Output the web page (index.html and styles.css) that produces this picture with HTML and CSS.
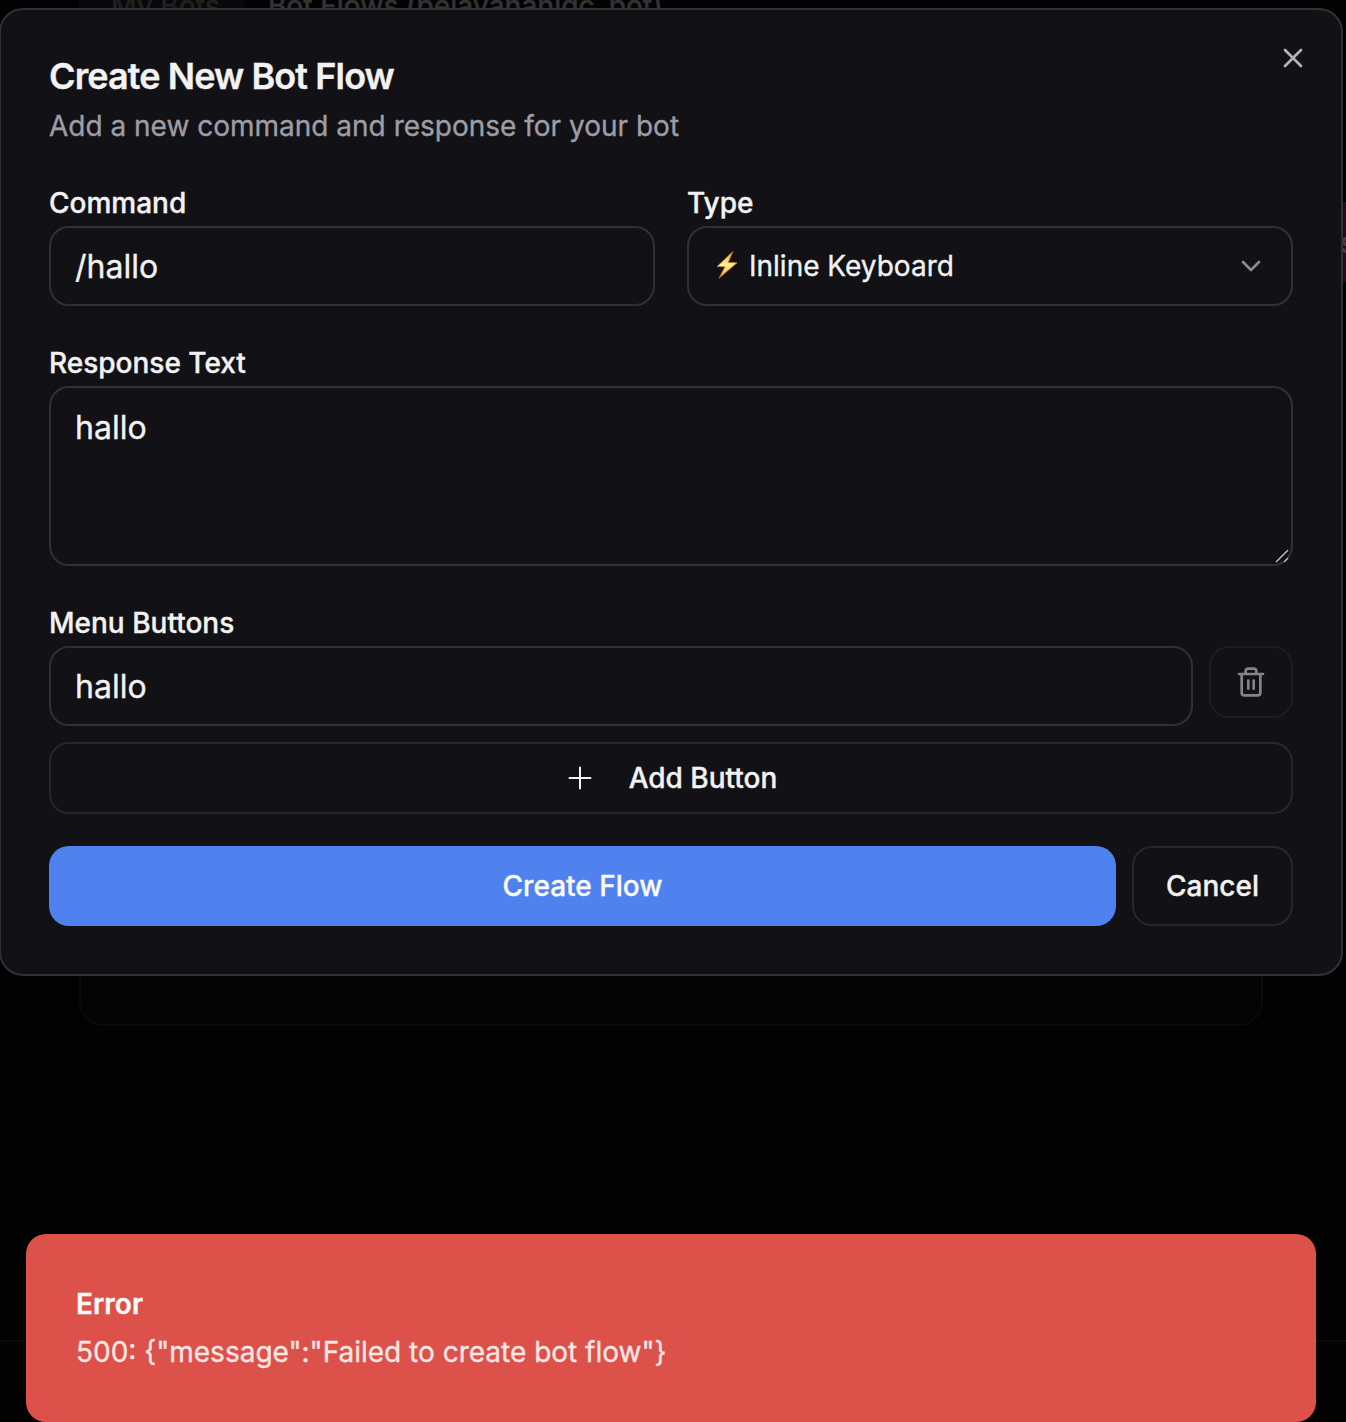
FILE: index.html
```html
<!DOCTYPE html>
<html lang="en">
<head>
<meta charset="utf-8">
<title>Create New Bot Flow</title>
<link rel="stylesheet" href="styles.css">
</head>
<body>
<div class="page" aria-hidden="true">
  <div class="tabs"><span class="tab tab-muted">My Bots</span><span class="tab">Bot Flows (pelavananidc_bot)</span></div>
  <div class="panel"></div>
  <div class="footer"></div>
  <div class="side-button">s</div>
</div>
<main class="dialog">
  <button class="close" aria-label="Close">
    <svg width="32" height="32" viewBox="0 0 24 24"><path d="M18 6 6 18M6 6l12 12"/></svg>
  </button>
  <header class="header">
    <h1>Create New Bot Flow</h1>
    <p>Add a new command and response for your bot</p>
  </header>
  <form class="form">
    <div class="row">
      <div class="field">
        <label>Command</label>
        <div class="control">/hallo</div>
      </div>
      <div class="field">
        <label>Type</label>
        <div class="control select">
          <svg class="bolt" width="22" height="28" viewBox="0 0 22 28"><defs><linearGradient id="gold" x1="0" y1="0" x2="0" y2="1"><stop offset="0" stop-color="#f5a623"/><stop offset=".5" stop-color="#fff3a0"/><stop offset="1" stop-color="#f39a1d"/></linearGradient></defs><path d="M16.6.8 1 15.6l8 .2L3 27.2 21 11.8l-8.600-.3z" fill="url(#gold)" stroke="#c67a1d" stroke-width=".8"/></svg>
          <span>Inline Keyboard</span>
          <svg class="chevron" width="32" height="32" viewBox="0 0 24 24"><path d="m6 9 6 6 6-6"/></svg>
        </div>
      </div>
    </div>
    <div class="field">
      <label>Response Text</label>
      <div class="control area">hallo<svg class="grip" width="16" height="16" viewBox="0 0 16 16"><path class="grip-shade" d="M1.500 13 13 1.500M9.500 13l3.500-3.500"/><path d="M2 14 14 2M10 14l4-4"/></svg></div>
    </div>
    <div class="field">
      <label>Menu Buttons</label>
      <div class="menu-row">
        <div class="control">hallo</div>
        <button type="button" class="outline trash" aria-label="Delete">
          <svg width="32" height="32" viewBox="0 0 24 24"><path d="M3 6h18M19 6v14a2 2 0 0 1-2 2H7a2 2 0 0 1-2-2V6M8 6V4a2 2 0 0 1 2-2h4a2 2 0 0 1 2 2v2M10 11v6M14 11v6"/></svg>
        </button>
      </div>
      <button type="button" class="outline add">
        <svg width="32" height="32" viewBox="0 0 32 32"><path d="M5.500 16h21M16 5.500v21"/></svg>
        <span>Add Button</span>
      </button>
    </div>
    <div class="actions">
      <button type="button" class="primary">Create Flow</button>
      <button type="button" class="outline cancel">Cancel</button>
    </div>
  </form>
</main>
<aside class="toast">
  <strong>Error</strong>
  <p>500: {"message":"Failed to create bot flow"}</p>
</aside>
</body>
</html>
```
FILE: styles.css
```css
* { box-sizing: border-box; margin: 0; }
body {
  position: relative;
  width: 1346px;
  height: 1422px;
  overflow: hidden;
  background: #020202;
  color: #f2f2f2;
  font-family: Inter, "Liberation Sans", sans-serif;
  font-size: 28px;
  -webkit-text-stroke: 0.35px currentColor;
}
button { font: inherit; font-weight: 500; color: inherit; background: none; border: 0; padding: 0; }
svg { fill: none; stroke: currentColor; stroke-width: 2; stroke-linecap: round; stroke-linejoin: round; flex: none; }

/* Dimmed page behind the dialog */
.page { position: absolute; inset: 0; overflow: hidden; }
.tabs { position: absolute; left: 79px; top: -30px; height: 64px; display: flex; background: #030303; padding-right: 8px; }
.tab { padding: 0 24px; line-height: 72px; font-weight: 500; color: #323232; white-space: nowrap; }
.tab-muted { padding: 0 24px 0 32px; background: #080808; color: #202020; }
.panel { position: absolute; left: 79px; top: 700px; width: 1184px; height: 326px; border: 2px solid #0a0a0b; border-radius: 24px; background: #040404; }
.footer { position: absolute; left: 0; right: 0; top: 1340px; height: 82px; border-top: 2px solid #0a0a0b; }
.side-button { position: absolute; left: 1330px; top: 202px; width: 60px; height: 80px; padding-left: 10px; line-height: 82px; font-weight: 500; background: #260a20; color: #4b3a48; }

/* Dialog */
.dialog {
  position: absolute;
  left: -1px;
  top: 8px;
  width: 1344px;
  height: 968px;
  padding: 48px;
  border: 2px solid #303035;
  border-radius: 24px;
  background: #121216;
}
.close { position: absolute; right: 32px; top: 32px; width: 32px; height: 32px; color: #b3b3b5; }
.close svg { display: block; }
.header { display: flex; flex-direction: column; gap: 12px; margin-bottom: 32px; }
.header h1 { font-size: 36px; line-height: 36px; font-weight: 600; letter-spacing: -0.9px; }
.header p { line-height: 40px; color: #9d9da6; }
.form { display: flex; flex-direction: column; gap: 32px; }
.row { display: grid; grid-template-columns: 1fr 1fr; gap: 32px; }
.field { display: flex; flex-direction: column; }
label { height: 48px; line-height: 50px; font-weight: 500; }
.control {
  display: flex;
  align-items: center;
  flex: 1;
  min-height: 80px;
  padding: 0 24px;
  border: 2px solid #303035;
  border-radius: 20px;
  font-size: 32px;
}
.select { font-size: 28px; }
.bolt { margin: -2px 11px 0 3px; }
.chevron { margin-left: auto; color: #8a8a8c; }
.area { position: relative; align-items: flex-start; flex: none; height: 180px; padding-top: 16px; line-height: 48px; }
.grip { position: absolute; right: 1px; bottom: 0; color: #b5b5b8; stroke-width: 1.7; stroke-linecap: butt; }
.grip-shade { stroke: #000; }
.menu-row { display: flex; align-items: flex-start; gap: 16px; margin-bottom: 16px; }
.outline { display: flex; align-items: center; justify-content: center; border: 2px solid #27272b; border-radius: 20px; }
.trash { width: 84px; height: 72px; color: #858587; border-color: #1d1d21; }
.add { height: 72px; gap: 33px; padding-right: 1px; }
.actions { display: flex; gap: 16px; }
.primary { flex: 1; height: 80px; border-radius: 20px; background: #4f82ee; color: #fafafa; }
.cancel { width: 161px; height: 80px; }

/* Error toast */
.toast {
  position: absolute;
  left: 26px;
  top: 1234px;
  width: 1290px;
  height: 188px;
  padding: 50px;
  border-radius: 20px;
  background: #dc5149;
  color: #fafafa;
  display: flex;
  flex-direction: column;
  gap: 8px;
}
.toast strong { line-height: 40px; font-weight: 600; }
.toast p { line-height: 40px; color: #f9e6e5; }
```
